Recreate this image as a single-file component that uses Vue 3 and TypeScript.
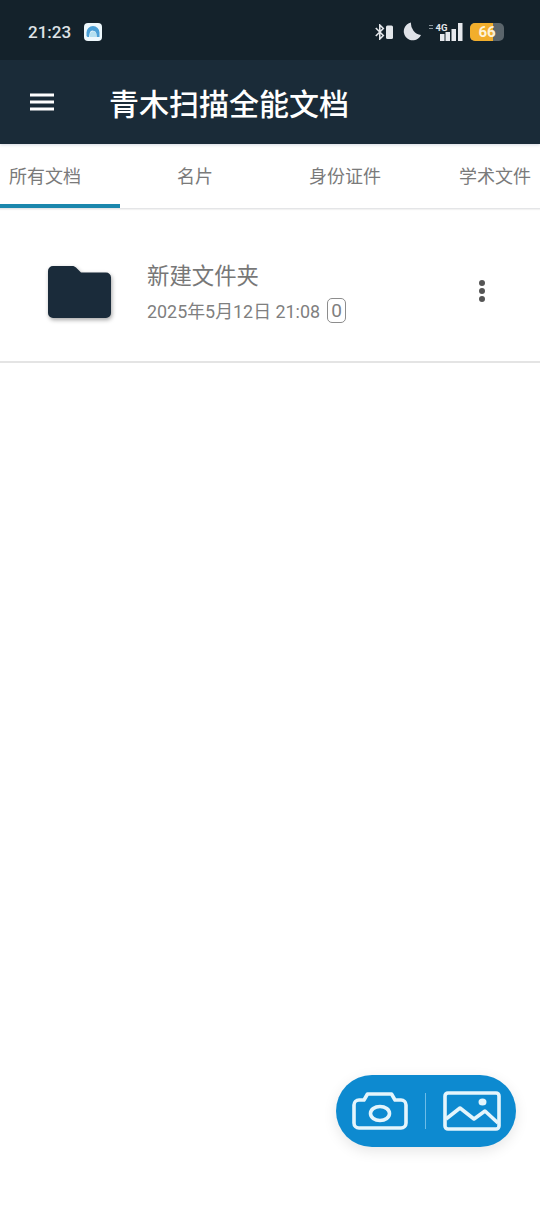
<template>
  <div class="screen">
    <header class="head">
      <div class="status">
        <span class="clock">21:23</span>
        <svg class="app-badge" viewBox="0 0 18 18" width="18" height="18">
          <rect width="18" height="18" rx="4" fill="#eef8fc" />
          <path d="M2.500 13V9.500a6.500 6.500 0 0 1 13 0V14h-2.800l-.4-3.500a3.400 3.400 0 0 0-6.600-.5L5 14H3.500z" fill="#4a9fd6" />
          <path d="M5.500 14l.7-4a3.300 3.300 0 0 1 6.100.5l.4 3.500z" fill="#b5e0f0" />
        </svg>
        <div class="status-right">
          <svg class="bt" viewBox="0 0 18 16" width="18" height="16" fill="none">
            <path d="M.8 4l7.500 7.500L4.800 15V1l3.500 3.500L.8 12" stroke="#e3e6ea" stroke-width="1.600" />
            <rect x="11" y="1.500" width="7" height="13.500" rx="1.500" fill="#e3e6ea" />
          </svg>
          <svg class="moon" viewBox="0 0 18 19" width="18" height="19">
            <path d="M8 .5a9 9 0 1 0 10 12.500A11.500 11.500 0 0 1 8 .5z" fill="#dfe2e8" />
          </svg>
          <svg class="signal" viewBox="0 -1 34 19" width="34" height="19">
            <rect x="0" y="2" width="4" height="1" fill="#8a949b" />
            <rect x="0" y="5" width="4" height="1" fill="#8a949b" />
            <text x="6.500" y="7.500" class="net">4G</text>
            <rect x="11" y="11" width="4.500" height="7" fill="#e6e8ec" />
            <rect x="16.500" y="9" width="4.500" height="9" fill="#e6e8ec" />
            <rect x="22.500" y="6" width="4.500" height="12" fill="#e6e8ec" />
            <rect x="29" y="0" width="4.500" height="18" fill="#e6e8ec" />
          </svg>
          <div class="battery"><span class="fill"></span><span class="pct">66</span></div>
        </div>
      </div>
      <div class="toolbar">
        <svg class="menu" viewBox="0 0 24 18" width="24" height="18">
          <rect y="0.500" width="24" height="3" fill="#fff" />
          <rect y="7.500" width="24" height="3" fill="#fff" />
          <rect y="14.500" width="24" height="3" fill="#fff" />
        </svg>
        <h1 class="title">青木扫描全能文档</h1>
      </div>
    </header>

    <nav class="tabs">
      <div v-for="(tab, i) in tabs" :key="tab" class="tab" :class="{ active: i === 0 }">{{ tab }}</div>
    </nav>

    <div class="row">
      <svg class="folder" viewBox="0 0 63 52" width="63" height="52">
        <path d="M5 0h19c2 0 3 .6 4 1.600L33 6.500h25a5 5 0 0 1 5 5V47a5 5 0 0 1-5 5H5a5 5 0 0 1-5-5V5a5 5 0 0 1 5-5z" fill="#1a2b3a" />
      </svg>
      <div class="info">
        <div class="name">新建文件夹</div>
        <div class="meta">
          <span>2025年5月12日 21:08</span>
          <span class="count">0</span>
        </div>
      </div>
      <div class="more"><i></i><i></i><i></i></div>
    </div>

    <div class="fab">
      <svg viewBox="0 0 56 38" width="56" height="38" fill="none" stroke="#e4f5fc" stroke-width="3.600">
        <path d="M7 8h5l3.500-6h24L43 8h6a5 5 0 0 1 5 5v18a5 5 0 0 1-5 5H7a5 5 0 0 1-5-5V13a5 5 0 0 1 5-5z" stroke-linejoin="round" />
        <ellipse cx="28" cy="21.500" rx="9.500" ry="7" />
      </svg>
      <span class="sep"></span>
      <svg viewBox="0 0 58 40" width="58" height="40" fill="none" stroke="#e4f5fc" stroke-width="3.600">
        <rect x="2" y="2" width="54" height="36" rx="3" />
        <path d="M3 28l14-11 14 11 11-8 13 12" stroke-linejoin="round" />
        <ellipse cx="39.500" cy="11" rx="4" ry="3.500" fill="#e4f5fc" stroke="none" />
      </svg>
    </div>
  </div>
</template>

<script setup lang="ts">
const tabs: string[] = ['所有文档', '名片', '身份证件', '学术文件']
</script>

<style>
html,
body {
  margin: 0;
  background: #fff;
}
</style>

<style scoped>
.screen {
  position: relative;
  width: 540px;
  height: 1207px;
  overflow: hidden;
  background: #fff;
  font-family: Roboto, "Noto Sans CJK SC", sans-serif;
}

.head {
  box-shadow: 0 1px 3px rgba(30, 50, 90, 0.18);
}

.status {
  height: 60px;
  background: #14222b;
  display: flex;
  align-items: center;
  padding: 3px 36px 0 28px;
  box-sizing: border-box;
}

.clock {
  color: #dfe3e6;
  font-size: 17px;
  font-weight: 500;
}

.app-badge {
  margin-left: 13px;
}

.status-right {
  margin-left: auto;
  display: flex;
  align-items: center;
}

.moon {
  margin-left: 10px;
}

.signal {
  margin-left: 8px;
}

.net {
  fill: #e6e8ec;
  font-size: 9.500px;
  font-weight: 700;
  font-family: Roboto, sans-serif;
}

.battery {
  position: relative;
  margin-left: 7px;
  width: 34px;
  height: 18px;
  border-radius: 5px;
  background: #5b656b;
  overflow: hidden;
  display: flex;
  align-items: center;
  justify-content: center;
}

.fill {
  position: absolute;
  left: 0;
  top: 0;
  bottom: 0;
  width: 23px;
  background: #f2ae2c;
}

.pct {
  position: relative;
  color: #fdf3d9;
  font-size: 15px;
  font-weight: 700;
}

.toolbar {
  height: 84px;
  background: #1a2b38;
  display: flex;
  align-items: center;
  padding-left: 30px;
}

.title {
  margin: 0 0 0 55px;
  color: #fff;
  font-size: 30px;
  font-weight: 500;
  letter-spacing: 0;
}

.tabs {
  display: flex;
  margin-left: -30px;
  width: 630px;
  height: 64px;
  border-bottom: 1px solid #e4e5e7;
  box-shadow: 0 1px 1px rgba(0, 0, 0, 0.05);
}

.tab {
  position: relative;
  flex: 0 0 150px;
  text-align: center;
  line-height: 66px;
  font-size: 18px;
  color: #7a7a7a;
}

.tab.active::after {
  content: "";
  position: absolute;
  left: 0;
  right: 0;
  bottom: 0;
  height: 4px;
  background: #1b87ad;
}

.row {
  height: 154px;
  box-sizing: border-box;
  display: flex;
  align-items: center;
  padding: 14px 0 0 48px;
  border-bottom: 2px solid #e4e4e4;
}

.folder {
  filter: drop-shadow(1px 2px 2px rgba(0, 0, 0, 0.35));
}

.info {
  margin-left: 36px;
  flex: 1;
}

.name {
  font-size: 22.400px;
  line-height: 30px;
  color: #777;
}

.meta {
  margin-top: 6px;
  display: flex;
  align-items: center;
  gap: 7px;
  font-size: 17.900px;
  color: #7f7f7f;
}

.count {
  width: 19px;
  height: 25px;
  border: 1.500px solid #8d8d8d;
  border-radius: 5px;
  box-sizing: border-box;
  display: flex;
  align-items: center;
  justify-content: center;
  font-size: 19px;
}

.more {
  display: flex;
  flex-direction: column;
  gap: 2px;
  margin: -2px 55px 0 0;
}

.more i {
  width: 6px;
  height: 6px;
  border-radius: 50%;
  background: #555;
}

.fab {
  position: absolute;
  left: 336px;
  top: 1075px;
  width: 180px;
  height: 72px;
  border-radius: 36px;
  background: #0d8ad0;
  box-shadow: 0 4px 14px rgba(0, 0, 0, 0.1);
  display: flex;
  align-items: center;
  justify-content: center;
  gap: 17px;
}

.sep {
  width: 1px;
  height: 36px;
  background: #6cbce8;
}
</style>
